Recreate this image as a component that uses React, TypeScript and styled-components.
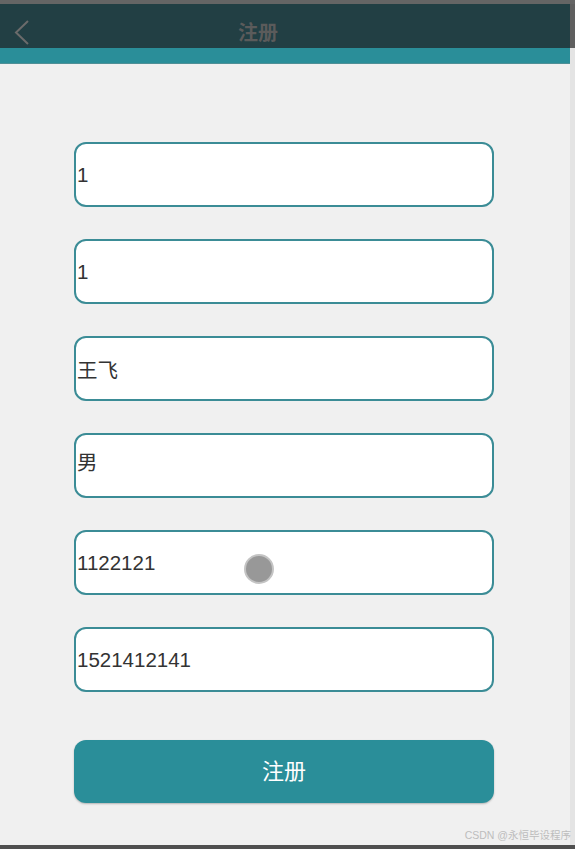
import React from "react";
import styled, { createGlobalStyle } from "styled-components";

const GlobalStyle = createGlobalStyle`
  html, body {
    margin: 0;
    padding: 0;
    background: #f0f0f0;
  }
  body {
    font-family: "Liberation Sans", "Noto Sans CJK SC", sans-serif;
  }
`;

const Frame = styled.div`
  position: relative;
  width: 575px;
  height: 849px;
  display: flex;
  flex-direction: column;
  background: #f0f0f0;
  overflow: hidden;
`;

const TopEdge = styled.div`
  height: 4px;
  background: #656565;
`;

const BottomEdge = styled.div`
  height: 4px;
  background: #4f4f4f;
`;

const Body = styled.div`
  flex: 1;
  display: flex;
`;

const Screen = styled.div`
  flex: 1;
  display: flex;
  flex-direction: column;
`;

const Gutter = styled.div`
  width: 5px;
  background: linear-gradient(#5f5f5f 0 44px, #e4e4e4 44px 100%);
`;

const Header = styled.header`
  height: 44px;
  display: flex;
  align-items: center;
  background: #223f44;
`;

const BackButton = styled.div`
  width: 40px;
  height: 44px;
  display: flex;
  align-items: center;
  padding: 12px 0 0 14px;
  box-sizing: border-box;
`;

const Title = styled.h1`
  flex: 1;
  margin: 0;
  text-align: center;
  font-size: 20px;
  font-weight: bold;
  color: #5b5b5b;
  padding-top: 10px;
`;

const HeaderSpacer = styled.div`
  width: 94px;
`;

const Band = styled.div`
  height: 15px;
  background: #2a8e99;
  border-bottom: 1px solid #4f8f96;
`;

const Form = styled.form`
  display: flex;
  flex-direction: column;
  gap: 32px;
  padding: 78px 0 0 74px;
  width: 420px;
`;

const Field = styled.input<{ $lift?: number }>`
  height: 65px;
  box-sizing: border-box;
  border: 2px solid #3b8c96;
  border-radius: 12px;
  background: #ffffff;
  padding: 0 0 ${(p) => p.$lift ?? 0}px 1px;
  font-family: "Liberation Sans", "Noto Sans CJK SC", sans-serif;
  font-size: 20.5px;
  color: #333333;
  outline: none;
`;

const Submit = styled.button`
  margin-top: 16px;
  height: 63px;
  border: none;
  border-radius: 12px;
  background: #2a8e99;
  color: #ffffff;
  font-family: "Noto Sans CJK SC", sans-serif;
  font-size: 22px;
  padding: 0 0 6px;
  box-shadow: 0 1px 2px rgba(0, 0, 0, 0.25);
`;

const Cursor = styled.div`
  position: absolute;
  left: 244px;
  top: 554px;
  width: 26px;
  height: 26px;
  border-radius: 50%;
  background: #989898;
  border: 2px solid #c4c4c4;
`;

const Watermark = styled.div`
  position: absolute;
  right: 4px;
  bottom: 7px;
  font-family: "Liberation Sans", "Noto Sans CJK SC", sans-serif;
  font-size: 10.5px;
  color: #bdbdbd;
`;

const fields = [
  { value: "1", lift: 0 },
  { value: "1", lift: 0 },
  { value: "王飞", lift: 0 },
  { value: "男", lift: 10 },
  { value: "1122121", lift: 0 },
  { value: "1521412141", lift: 0 },
];

const App: React.FC = () => {
  return (
    <Frame>
      <GlobalStyle />
      <TopEdge />
      <Body>
        <Screen>
          <Header>
            <BackButton>
              <svg width="15" height="25" viewBox="0 0 15 25">
                <polyline
                  points="14,1 2,12.5 14,24"
                  fill="none"
                  stroke="#6b6b6b"
                  strokeWidth="2"
                />
              </svg>
            </BackButton>
            <Title>注册</Title>
            <HeaderSpacer />
          </Header>
          <Band />
          <Form onSubmit={(e) => e.preventDefault()}>
            {fields.map((f, i) => (
              <Field key={i} defaultValue={f.value} $lift={f.lift} />
            ))}
            <Submit type="submit">注册</Submit>
          </Form>
        </Screen>
        <Gutter />
      </Body>
      <BottomEdge />
      <Cursor />
      <Watermark>CSDN @永恒毕设程序</Watermark>
    </Frame>
  );
};

export default App;
